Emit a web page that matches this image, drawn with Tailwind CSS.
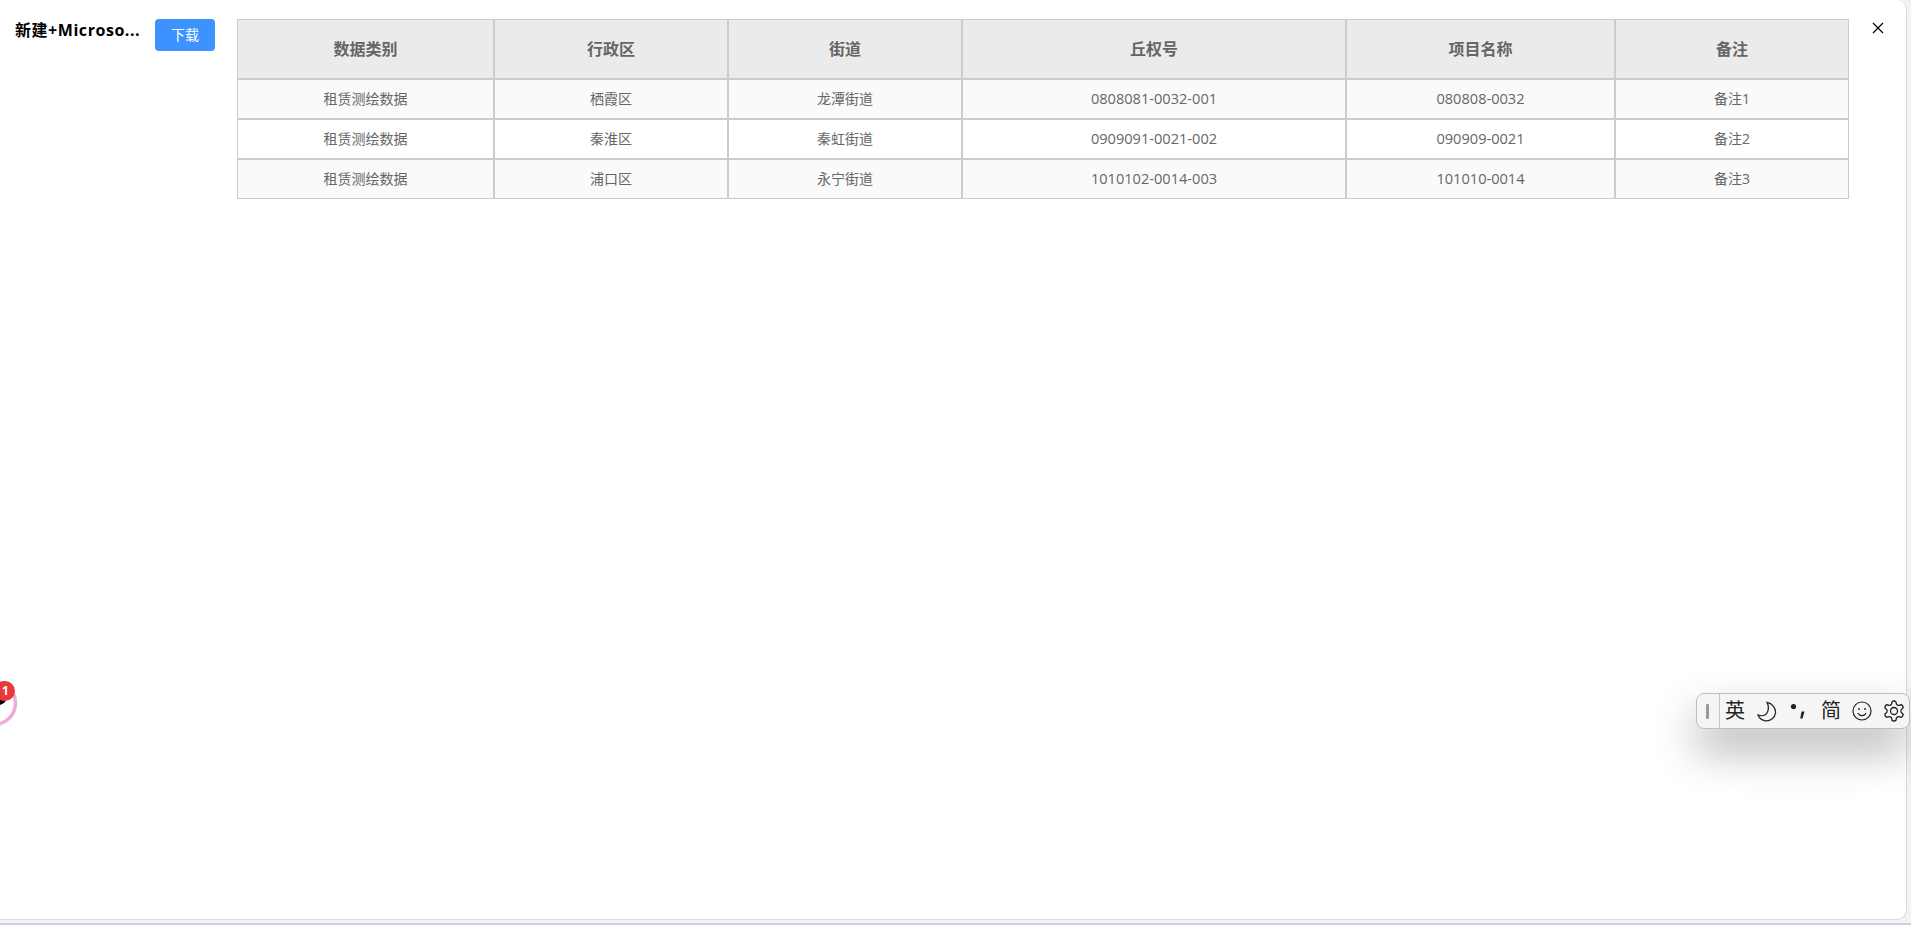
<!doctype html>
<html lang="zh">
<head>
<meta charset="utf-8">
<script src="https://cdn.jsdelivr.net/npm/@tailwindcss/browser@4"></script>
</head>
<body class="m-0 overflow-hidden bg-[#f3f3f3] font-['Open_Sans','Noto_Sans_CJK_SC',sans-serif]">
<div class="relative w-[1911px] h-[925px] overflow-hidden">
  <div class="absolute left-0 right-0 bottom-0 h-[2px] bg-[#d5cfe6]"></div>
  <div class="flex h-[920px] w-[1907px] rounded-br-[10px] rounded-tr-[10px] border-r border-b border-[#dcdcdc] bg-white pt-[19px]">
    <div class="flex w-[237px] shrink-0 items-start pl-[15px]">
      <div class="w-[125px] whitespace-nowrap text-[16px] leading-[22px] font-bold text-black tracking-[0.55px]">新建+Microso...</div>
      <button class="ml-[15px] h-[32px] w-[60px] rounded-[4px] bg-[#3c92ff] pb-[2px] text-center text-[14px] text-white">下载</button>
    </div>
    <table class="h-[180px] w-[1612px] table-fixed border-separate border-spacing-0 text-center text-[14px] text-[#666]">
      <colgroup>
        <col class="w-[257px]"><col class="w-[234px]"><col class="w-[234px]"><col class="w-[384px]"><col class="w-[269px]"><col class="w-[234px]">
      </colgroup>
      <thead>
        <tr class="h-[60px] bg-[#ebebeb] text-[16px]">
          <th class="border border-[#ccc] font-bold">数据类别</th>
          <th class="border border-[#ccc] font-bold">行政区</th>
          <th class="border border-[#ccc] font-bold">街道</th>
          <th class="border border-[#ccc] font-bold">丘权号</th>
          <th class="border border-[#ccc] font-bold">项目名称</th>
          <th class="border border-[#ccc] font-bold">备注</th>
        </tr>
      </thead>
      <tbody>
        <tr class="h-[40px] bg-[#fafafa]">
          <td class="border border-[#ccc] pb-[2px]">租赁测绘数据</td>
          <td class="border border-[#ccc] pb-[2px]">栖霞区</td>
          <td class="border border-[#ccc] pb-[2px]">龙潭街道</td>
          <td class="border border-[#ccc] pb-[1px] text-[14.6px]">0808081-0032-001</td>
          <td class="border border-[#ccc] pb-[1px] text-[14.6px]">080808-0032</td>
          <td class="border border-[#ccc] pb-[2px]">备注1</td>
        </tr>
        <tr class="h-[40px] bg-white">
          <td class="border border-[#ccc] pb-[2px]">租赁测绘数据</td>
          <td class="border border-[#ccc] pb-[2px]">秦淮区</td>
          <td class="border border-[#ccc] pb-[2px]">秦虹街道</td>
          <td class="border border-[#ccc] pb-[1px] text-[14.6px]">0909091-0021-002</td>
          <td class="border border-[#ccc] pb-[1px] text-[14.6px]">090909-0021</td>
          <td class="border border-[#ccc] pb-[2px]">备注2</td>
        </tr>
        <tr class="h-[40px] bg-[#fafafa]">
          <td class="border border-[#ccc] pb-[2px]">租赁测绘数据</td>
          <td class="border border-[#ccc] pb-[2px]">浦口区</td>
          <td class="border border-[#ccc] pb-[2px]">永宁街道</td>
          <td class="border border-[#ccc] pb-[1px] text-[14.6px]">1010102-0014-003</td>
          <td class="border border-[#ccc] pb-[1px] text-[14.6px]">101010-0014</td>
          <td class="border border-[#ccc] pb-[2px]">备注3</td>
        </tr>
      </tbody>
    </table>
    <button class="ml-[23px] mt-[3px] flex h-[12px] w-[12px] items-center justify-center text-black" aria-label="关闭">
      <svg viewBox="0 0 12 12" class="h-[12px] w-[12px]" fill="none" stroke="currentColor" stroke-width="1.2"><path d="M1 1l10 10M11 1L1 11"/></svg>
    </button>
  </div>

  <!-- floating assistant widget clipped by the left edge -->
  <div class="absolute left-0 top-[680px] h-[50px] w-[24px]">
    <svg viewBox="0 0 24 50" class="absolute left-0 top-0 h-[50px] w-[24px]" fill="none">
      <circle cx="-6" cy="23" r="21.500" stroke="#efaad8" stroke-width="3.500"/>
      <path d="M0 25 C3 24 6 22 7 18 L0 14 Z" fill="#000"/>
    </svg>
    <div class="absolute left-[-5px] top-[1px] flex h-[20px] w-[20px] items-center justify-center rounded-full bg-[#e8383a] pl-[1px] text-[12px] font-bold leading-none text-white">1</div>
  </div>

  <!-- IME toolbar floating over the page -->
  <div class="absolute left-[1696px] top-[693px] flex h-[36px] w-[214px] items-center rounded-[8px] border border-[#bdbdbd] bg-[#f5f5f5] text-[#222] shadow-[0_22px_44px_rgba(0,0,0,0.3)]">
    <div class="flex h-full w-[23px] shrink-0 items-center justify-center border-r border-[#c4c4c4]">
      <span class="ml-[-1px] h-[15px] w-[3px] rounded-[1px] bg-[#9a9a9a]"></span>
    </div>
    <span class="ml-[5px] w-[20px] shrink-0 text-center text-[20px] leading-[24px]">英</span>
    <svg viewBox="0 0 20 20" class="ml-[12px] h-[21px] w-[20px] shrink-0" fill="none" stroke="#222" stroke-width="1.3"><path d="M10 .8C15 1.600 19 6.500 18.500 11.500 18 16.500 13 19.800 8.500 19.300 5 18.900 2.200 16.500 1 13.500 5 15 9 14 10.500 10.500 12 7 11.500 3.800 10 .8Z"/></svg>
    <svg viewBox="0 0 16 16" class="ml-[13px] h-[16px] w-[16px] shrink-0" fill="#222"><circle cx="3.500" cy="3.500" r="2.600"/><path d="M11.500 8.500h3l-2 7h-2.300z"/></svg>
    <span class="ml-[15px] w-[20px] shrink-0 text-center text-[20px] leading-[24px]">简</span>
    <svg viewBox="0 0 20 20" class="ml-[11px] h-[20px] w-[20px] shrink-0" fill="none" stroke="#222" stroke-width="1.2"><circle cx="10" cy="10" r="9"/><circle cx="7" cy="8" r=".9" fill="#222" stroke="none"/><circle cx="13" cy="8" r=".9" fill="#222" stroke="none"/><path d="M5.800 12c1 1.800 2.500 2.700 4.200 2.700s3.200-.9 4.200-2.700"/></svg>
    <svg viewBox="0 0 24 24" class="ml-[10px] h-[24px] w-[24px] shrink-0" fill="none" stroke="#222" stroke-width="1.3"><path d="M12.220 2h-.44a2 2 0 0 0-2 2v.18a2 2 0 0 1-1 1.730l-.43.25a2 2 0 0 1-2 0l-.15-.08a2 2 0 0 0-2.730.73l-.22.38a2 2 0 0 0 .73 2.730l.15.1a2 2 0 0 1 1 1.720v.51a2 2 0 0 1-1 1.740l-.15.09a2 2 0 0 0-.73 2.730l.22.38a2 2 0 0 0 2.730.73l.15-.08a2 2 0 0 1 2 0l.43.25a2 2 0 0 1 1 1.730V20a2 2 0 0 0 2 2h.44a2 2 0 0 0 2-2v-.18a2 2 0 0 1 1-1.730l.43-.25a2 2 0 0 1 2 0l.15.08a2 2 0 0 0 2.730-.73l.22-.39a2 2 0 0 0-.73-2.730l-.15-.08a2 2 0 0 1-1-1.740v-.5a2 2 0 0 1 1-1.740l.15-.09a2 2 0 0 0 .73-2.730l-.22-.38a2 2 0 0 0-2.730-.73l-.15.08a2 2 0 0 1-2 0l-.43-.25a2 2 0 0 1-1-1.730V4a2 2 0 0 0-2-2z"/><circle cx="12" cy="12" r="3.500"/></svg>
  </div>
</div>
</body>
</html>
